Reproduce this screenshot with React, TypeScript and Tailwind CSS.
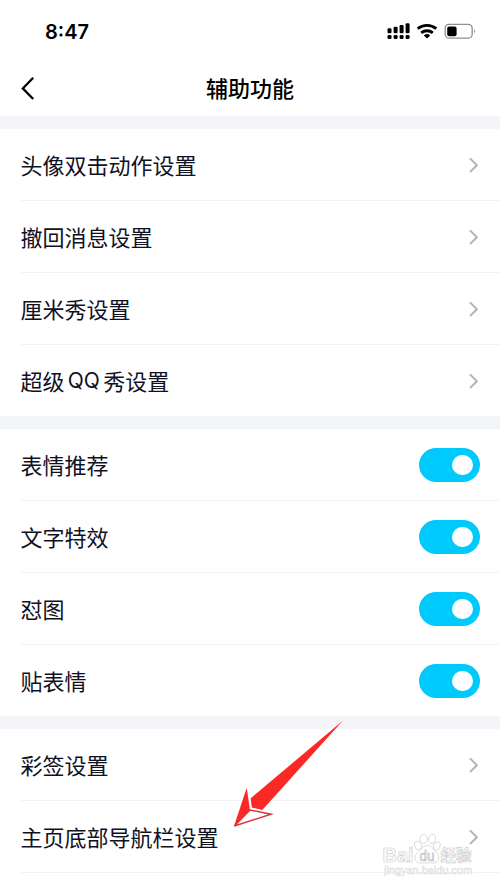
import type { ReactNode } from "react";

function Chevron() {
  return (
    <svg className="mr-5 h-[16px] w-[12px]" viewBox="0 0 12 16" fill="none" stroke="#b4b5b9" strokeWidth="2">
      <path d="M2 1.4 L8.9 8.2 L2 15" />
    </svg>
  );
}

function Toggle() {
  return (
    <div className="mr-[20.5px] mt-px flex h-[33.5px] w-[60.5px] items-center justify-end rounded-full bg-[#00cafc] pr-[7px]">
      <div className="size-[20.5px] rounded-full bg-white" />
    </div>
  );
}

function Row({ children, toggle, last }: { children: ReactNode; toggle?: boolean; last?: boolean }) {
  return (
    <div className={`flex pl-[20.5px] ${last ? "h-[71px]" : "h-[72px]"}`}>
      <div className={`flex flex-1 items-center justify-between ${last ? "" : "border-b border-[#f2f2f4]"}`}>
        <span className="flex items-center whitespace-nowrap pb-px text-[22px] leading-8">{children}</span>
        {toggle ? <Toggle /> : <Chevron />}
      </div>
    </div>
  );
}

function Gap() {
  return <div className="h-[13px] bg-[#f4f5f9]" />;
}

function StatusBar() {
  return (
    <div className="flex h-[60px] items-center justify-between pl-[45px] pr-[24px] pt-[3px]">
      <span className="pt-px font-['Inter',sans-serif] text-[20px] font-semibold leading-6 text-black">8:47</span>
      <svg className="h-[20px] w-[90px]" viewBox="0 0 90 20">
        <g fill="#000">
          <rect x="1.5" y="6.2" width="4" height="5" rx="1.2" />
          <rect x="7.6" y="4.8" width="4" height="6.4" rx="1.2" />
          <rect x="13.6" y="3" width="4" height="8.2" rx="1.2" />
          <rect x="19.6" y="1.3" width="4" height="9.9" rx="1.2" />
          <rect x="1.5" y="13" width="4" height="4" rx="1.3" />
          <rect x="7.6" y="13" width="4" height="4" rx="1.3" />
          <rect x="13.6" y="13" width="4" height="4" rx="1.3" />
          <rect x="19.6" y="13" width="4" height="4" rx="1.3" />
        </g>
        <g fill="none" stroke="#000" strokeWidth="2.9">
          <path d="M31.7 6.7 A14.8 14.8 0 0 1 50.3 6.7" />
          <path d="M35.2 10.8 A9 9 0 0 1 46.8 10.8" />
        </g>
        <path d="M37.8 13.4 A5 5 0 0 1 44.2 13.4 L41 16.6 Z" fill="#000" />
        <rect x="59.2" y="2.4" width="27" height="13.8" rx="4" fill="none" stroke="#8e8e8e" strokeWidth="1.3" />
        <rect x="61.2" y="4.4" width="9.4" height="9.8" rx="2" fill="#000" />
        <path d="M88.2 7.2 Q90.2 9.3 88.2 11.4 Z" fill="#8e8e8e" />
      </svg>
    </div>
  );
}

function Arrow() {
  return (
    <svg className="absolute left-[225px] top-[712px] h-[122px] w-[126px]" viewBox="225 712 126 122">
      <path d="M343 720.5 L250.7 798.3 L251.8 807.6 L262.3 810 Z" fill="#fb2925" />
      <path d="M234.3 826 L271 814.2 L250 810 Z" fill="#fff" stroke="#d9363b" strokeWidth="1.5" />
      <path d="M246.7 787.7 L234 826.3 L250 810 Z" fill="#fb2925" />
    </svg>
  );
}

function Watermark() {
  return (
    <svg
      className="absolute left-[380px] top-[830px] h-[50px] w-[100px]"
      viewBox="380 830 100 50"
      fill="#fff"
      stroke="#cdcdcd"
      strokeWidth="0.7"
      fontFamily="'Liberation Sans', 'Noto Sans CJK SC', sans-serif"
    >
      <text x="382.5" y="862" fontSize="20.5" fontWeight="bold" textLength="31" lengthAdjust="spacingAndGlyphs">Bai</text>
      <ellipse cx="418" cy="845.5" rx="3.4" ry="4.5" transform="rotate(-20 418 845.5)" />
      <ellipse cx="423.6" cy="838.8" rx="3.5" ry="4.7" />
      <ellipse cx="432" cy="838.8" rx="3.4" ry="4.7" transform="rotate(10 432 838.8)" />
      <ellipse cx="436.8" cy="846" rx="3.3" ry="4.3" transform="rotate(20 436.8 846)" />
      <path d="M427 845.5 C422 845.5 421.5 850 418 852.5 C413 856 414.5 863 420.5 863 C424 863 430 862.6 432.5 863 C439 864 440.5 856.5 436.8 853 C433.5 849.5 432.5 845.5 427 845.5 Z" />
      <text x="419.5" y="860.5" fontSize="14" stroke="#bdbdbd" textLength="15" lengthAdjust="spacingAndGlyphs">du</text>
      <text x="440.5" y="861" fontSize="16" fontWeight="bold" textLength="31" lengthAdjust="spacingAndGlyphs">经验</text>
      <text x="384" y="873.5" fontSize="10.5" strokeWidth="0.5" stroke="#dadada" textLength="88" lengthAdjust="spacingAndGlyphs">jingyan.baidu.com</text>
    </svg>
  );
}

export default function App() {
  return (
    <div className="relative h-[888px] w-[500px] overflow-hidden bg-white font-['Noto_Sans_CJK_SC',sans-serif] text-[#10111f]">
      <StatusBar />
      <header className="grid h-[56px] grid-cols-3 items-center">
        <svg className="ml-[20px] h-[24px] w-[16px]" viewBox="0 0 16 24" fill="none" stroke="#000" strokeWidth="2.3">
          <path d="M13.2 1.8 L2.8 12.4 L13.2 23" />
        </svg>
        <h1 className="pb-[3px] text-center text-[22px] font-medium leading-8 text-black">辅助功能</h1>
      </header>
      <Gap />
      <Row>头像双击动作设置</Row>
      <Row>撤回消息设置</Row>
      <Row>厘米秀设置</Row>
      <Row last>
        超级
        <span className="w-[38.7px] pt-px text-center font-['Inter',sans-serif] text-[21px]">QQ</span>
        秀设置
      </Row>
      <Gap />
      <Row toggle>表情推荐</Row>
      <Row toggle>文字特效</Row>
      <Row toggle>怼图</Row>
      <Row toggle last>贴表情</Row>
      <Gap />
      <Row>彩签设置</Row>
      <Row>主页底部导航栏设置</Row>
      <Arrow />
      <Watermark />
    </div>
  );
}
